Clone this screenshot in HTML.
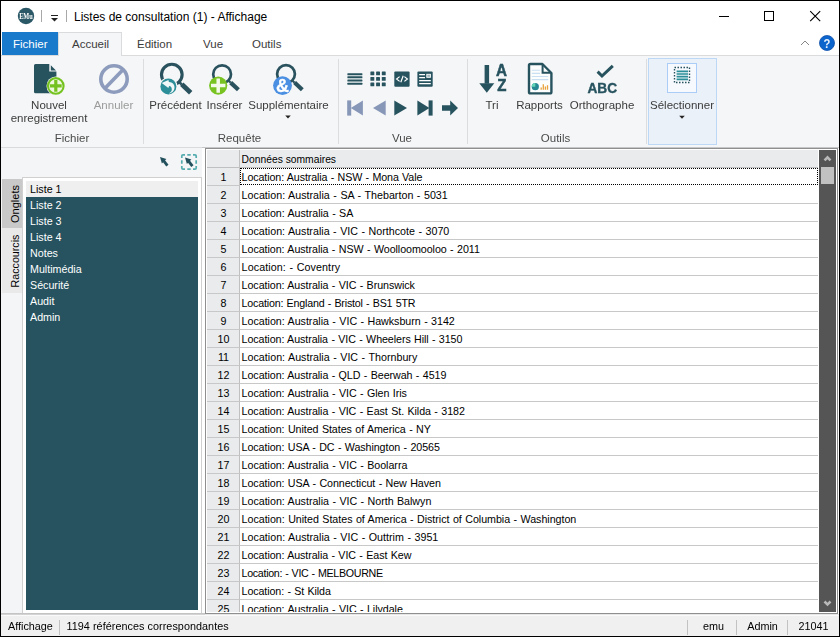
<!DOCTYPE html>
<html>
<head>
<meta charset="utf-8">
<title>Listes de consultation (1) - Affichage</title>
<style>
*{box-sizing:border-box;margin:0;padding:0}
html,body{width:840px;height:637px;overflow:hidden;background:#fff;font-family:"Liberation Sans",sans-serif;}
#win{position:absolute;left:0;top:0;width:840px;height:637px;background:#fff;overflow:hidden}
.abs{position:absolute}
.t{position:absolute;white-space:nowrap;line-height:1}
/* window frame */
#bt{left:0;top:0;width:840px;height:1px;background:#000}
#bl{left:0;top:0;width:1px;height:637px;background:#000}
#br{left:839px;top:0;width:1px;height:637px;background:#000}
#bb{left:0;top:636px;width:840px;height:1px;background:#000}
/* title */
#title{left:74px;top:11px;font-size:12px;color:#000}
/* tabs */
.tab{font-size:11.5px;color:#3b3b3b;top:39px}
/* ribbon */
#ribbon{left:1px;top:55px;width:838px;height:93px;background:#f5f6f7;border-top:1px solid #dadbdc;border-bottom:1px solid #c6c7c8}
.sep{position:absolute;width:1px;background:#dcddde;top:59px;height:85px}
.lbl{position:absolute;font-size:11.5px;color:#3b3b3b;white-space:nowrap;line-height:13px;text-align:center;transform:translateX(-50%)}
.grp{position:absolute;font-size:11.5px;color:#4a4a4a;white-space:nowrap;line-height:13px;top:132px;transform:translateX(-50%)}
/* left panel */
#left{left:1px;top:147px;width:201px;height:466px;background:#f4f5f7;border-top:1px solid #d9dadb}
.li{position:absolute;left:30px;font-size:10.7px;color:#fff;white-space:nowrap;line-height:12px}
/* grid */
#grid{left:205px;top:148px;width:633px;height:466px;background:#fff;border:1px solid #8f8f8f;overflow:hidden}
#gin{left:1px;top:1px;width:629px;height:462px;overflow:hidden;background:#fff}
.row{position:absolute;left:0;width:611px;height:18px;border-bottom:1px solid #c8c8c8}
.num{position:absolute;left:0;top:0;width:33px;height:18px;padding-left:1px;padding-top:1px;background:#e9ebed;border-right:1px solid #c0c0c0;border-bottom:1px solid #c8c8c8;font-size:10.7px;line-height:17px;text-align:center;color:#000}
.cell{position:absolute;left:34.6px;top:1px;word-spacing:.5px;font-size:10.7px;line-height:17px;color:#000;white-space:nowrap}
/* status */
#status{left:1px;top:614px;width:838px;height:22px;background:#f0f0f0;border-top:1px solid #e6e6e6;box-shadow:inset 0 1px 0 #fafafa}
.st{position:absolute;font-size:10.8px;color:#000;white-space:nowrap;line-height:12px;top:620px}
.ssep{position:absolute;width:1px;height:15px;top:620px;background:#c2c2c2}
</style>
</head>
<body>
<div id="win">
<!-- TITLEBAR -->
<svg class="abs" style="left:16.8px;top:6.8px;opacity:.999;will-change:opacity" width="18" height="18" viewBox="0 0 18 18"><circle cx="9" cy="9" r="8.2" fill="#2a5866"/><text x="9" y="11.9" font-family="Liberation Serif" font-weight="bold" font-size="8" fill="#fff" text-anchor="middle" textLength="13.6" lengthAdjust="spacingAndGlyphs">EMu</text></svg>
<div class="abs" style="left:41px;top:10px;width:1px;height:12px;background:#a8a8a8"></div>
<svg class="abs" style="left:50px;top:13px" width="10" height="10" viewBox="0 0 10 10"><rect x="1" y="2" width="7" height="1" fill="#222"/><path d="M1 5 H8 L4.5 8.5 Z" fill="#222"/></svg>
<div class="abs" style="left:66px;top:10px;width:1px;height:12px;background:#a8a8a8"></div>
<div class="t" id="title">Listes de consultation (1) - Affichage</div>
<svg class="abs" style="left:715px;top:8px" width="120" height="18" viewBox="0 0 120 18"><g stroke="#000" stroke-width="1" fill="none" shape-rendering="crispEdges"><path d="M4 8.5 H14"/><rect x="49.5" y="3.5" width="9" height="9"/></g><path d="M95.2 3.2 L105.2 13.2 M105.2 3.2 L95.2 13.2" stroke="#000" stroke-width="1.1" fill="none"/></svg>
<svg class="abs" style="left:799px;top:38px" width="12" height="10" viewBox="0 0 12 10"><path d="M2 7 L6 3 L10 7" stroke="#868686" stroke-width="1" fill="none"/></svg>
<svg class="abs" style="left:818px;top:33.85px;opacity:.999;will-change:opacity" width="18" height="18" viewBox="0 0 18 18"><circle cx="9" cy="9" r="7.5" fill="#0c64cd" stroke="#0e4fa8" stroke-width=".8"/><text transform="translate(9 13.6) scale(.84 1)" font-family="Liberation Sans" font-weight="bold" font-size="13.4" fill="#e8f1fb" text-anchor="middle">?</text></svg>
<!-- TABS -->
<div class="abs" style="left:2px;top:32px;width:56px;height:23px;background:#1979ca"></div>
<div class="t" style="left:13px;top:39px;font-size:11.5px;color:#fff">Fichier</div>
<div class="abs" style="left:58px;top:32px;width:64px;height:24px;background:#f5f6f7;border:1px solid #dadbdc;border-bottom:none;z-index:3"></div>
<div class="t tab" style="left:72px;z-index:4">Accueil</div>
<div class="t tab" style="left:137px">Édition</div>
<div class="t tab" style="left:203px">Vue</div>
<div class="t tab" style="left:252px">Outils</div>
<!-- RIBBON -->
<div class="abs" id="ribbon"></div>
<div class="abs" style="left:648px;top:58px;width:69px;height:87px;background:#ebf1f8;border:1px solid #bcd8f6"></div>
<div class="abs" style="left:667px;top:63px;width:30px;height:30px;background:#f6f9fd;border:1px solid #a9cdf6"></div>
<div class="sep" style="left:143px"></div><div class="sep" style="left:338px"></div><div class="sep" style="left:467px"></div><div class="sep" style="left:646px"></div>
<svg class="abs" style="left:0;top:0;opacity:.999;will-change:opacity" width="840" height="150" viewBox="0 0 840 150">
<defs>
<g id="mag"><circle cx="0" cy="0" r="8.9" fill="none" stroke="#2a525e" stroke-width="2.7"/><path d="M6.6 6.6 L8.6 8.6" stroke="#2a525e" stroke-width="2.2"/><path d="M8.6 8.4 L16.3 15.6" stroke="#2a525e" stroke-width="4.2"/></g>
</defs>
<!-- nouvel -->
<path d="M35.5 64 H49.3 V71.6 H56.4 V91.8 Q56.4 93.3 54.9 93.3 H35.5 Q34 93.3 34 91.8 V65.5 Q34 64 35.5 64 Z" fill="#27535f"/>
<path d="M50.8 65.2 L56 70.4 H50.8 Z" fill="#27535f"/>
<circle cx="55.8" cy="85.9" r="9.3" fill="#f5f6f7"/>
<circle cx="55.8" cy="85.9" r="7.8" fill="#eef8df" stroke="#74c21f" stroke-width="2.1"/>
<path d="M55.8 80 V91.8 M49.9 85.9 H61.7" stroke="#74c21f" stroke-width="3.2"/>
<!-- annuler -->
<circle cx="114" cy="79" r="13.2" fill="none" stroke="#8d9bbd" stroke-width="3.6"/>
<path d="M104.8 88.4 L123.2 69.6" stroke="#8d9bbd" stroke-width="3.6"/>
<!-- precedent -->
<g transform="translate(171.8 74.6) scale(1.16)"><use href="#mag"/></g>
<circle cx="168.4" cy="86.4" r="9.2" fill="#f5f6f7"/>
<circle cx="168.4" cy="86.4" r="8" fill="#2b8e98"/>
<path d="M161.7 83.1 L168.4 80 L168.9 82 C171.2 82 173.2 83.2 174 85 C174.8 86.8 174.7 88.9 173.7 90.6 C172.7 92.3 171 93.3 168.8 93.6 C171 92.2 172 90.4 171.8 88.9 C171.6 87.3 170.6 86.3 169.1 86.1 L168.4 88 Z" fill="#f0f7f8"/>
<!-- inserer -->
<g transform="translate(222.1 74.2)"><use href="#mag"/></g>
<circle cx="218.2" cy="85.6" r="9.1" fill="#78c322"/>
<path d="M218.2 78.4 V92.8 M211 85.6 H225.4" stroke="#f3faea" stroke-width="3.5"/>
<!-- supplementaire -->
<g transform="translate(286 74.1)"><use href="#mag"/></g>
<circle cx="282.5" cy="85.6" r="9.4" fill="#4a8fe2"/>
<text x="282.5" y="92" font-family="Liberation Sans" font-weight="bold" font-size="18" fill="#fff" stroke="#fff" stroke-width=".3" text-anchor="middle">&amp;</text>
<path d="M285.2 115.6 H290.8 L288 118.6 Z" fill="#222"/>
<!-- vue top row -->
<g fill="#27535f">
<rect x="347.4" y="73.2" width="15" height="2" rx=".5"/><rect x="347.4" y="76.3" width="15" height="2" rx=".5"/><rect x="347.4" y="79.5" width="15" height="2" rx=".5"/><rect x="347.4" y="82.8" width="15" height="2" rx=".5"/>
<g id="gr"><rect x="370.4" y="71.5" width="3.9" height="3.8" rx=".6"/><rect x="376.1" y="71.5" width="3.9" height="3.8" rx=".6"/><rect x="381.8" y="71.5" width="3.9" height="3.8" rx=".6"/></g>
<use href="#gr" y="5.5"/><use href="#gr" y="11"/>
<rect x="394.3" y="71.4" width="15.3" height="15.3" rx="1"/>
<rect x="417.4" y="71.4" width="15.3" height="15.3" rx="1"/>
</g>
<g stroke="#fff" stroke-width="1.2" fill="none"><path d="M399.6 76.6 L396.6 79 L399.6 81.4 M404.4 76.6 L407.4 79 L404.4 81.4 M403.2 75.8 L400.8 82.2"/>
<path d="M419.2 74.7 H425 M419.2 77.6 H425 M419.2 80.6 H430.8 M419.2 83.6 H430.8"/></g>
<rect x="426.8" y="74.3" width="3.6" height="3" fill="#9fb4ba" stroke="#fff" stroke-width=".9"/>
<!-- vue bottom row -->
<g fill="#8797b8"><rect x="347.2" y="100.4" width="4" height="15.2"/><path d="M362.9 100.4 V115.6 L350.8 108 Z"/><path d="M385.7 100.4 V115.6 L373 108 Z"/></g>
<g fill="#27535f"><path d="M394.3 100.4 V115.6 L407 108 Z"/><path d="M417.4 100.4 V115.6 L429.4 108 Z"/><rect x="428.6" y="100.4" width="4" height="15.2"/>
<path d="M442 105.2 H450.2 V100.4 L458 108 L450.2 115.6 V110.8 H442 Z"/></g>
<!-- tri -->
<g fill="#27535f"><rect x="484.6" y="65" width="4.5" height="18.6"/><path d="M479.3 83.2 H494.3 L486.8 92.8 Z"/>
<text x="501.5" y="76.3" font-family="Liberation Sans" font-weight="bold" font-size="15.6" text-anchor="middle" textLength="11" lengthAdjust="spacingAndGlyphs" stroke="#27535f" stroke-width=".5">A</text>
<text x="501.8" y="90.6" font-family="Liberation Sans" font-weight="bold" font-size="15.6" text-anchor="middle" textLength="9.2" lengthAdjust="spacingAndGlyphs" stroke="#27535f" stroke-width=".5">Z</text></g>
<!-- rapports -->
<path d="M530.4 64 H542.4 L551.4 73 V92 Q551.4 93.4 550 93.4 H530.4 Q529 93.4 529 92 V65.4 Q529 64 530.4 64 Z" fill="#fcfdfd" stroke="#27535f" stroke-width="2.4" stroke-linejoin="round"/>
<path d="M542.6 64.4 V72.8 H551" fill="none" stroke="#27535f" stroke-width="2"/>
<path d="M531.8 70.3 H540 M531.8 73.4 H540 M531.8 76.5 H548.2 M531.8 79.6 H548.2" stroke="#c9dff2" stroke-width="1.1"/>
<circle cx="535.3" cy="86.7" r="3.6" fill="#258892"/><path d="M535.3 86.7 V83.1 A3.6 3.6 0 0 0 531.7 86.7 Z" fill="#63d4b6"/>
<path d="M541.2 89.8 V87.6 M543.3 89.8 V84.2 M545.4 89.8 V86.6 M547.5 89.8 V85.2" stroke="#e9a23b" stroke-width="1.3"/>
<!-- orthographe -->
<path d="M597.6 71.6 L602 76 L612.8 65.8" fill="none" stroke="#27535f" stroke-width="3"/>
<text x="602.3" y="92.5" font-family="Liberation Sans" font-weight="bold" font-size="14.8" fill="#27535f" stroke="#27535f" stroke-width=".4" text-anchor="middle" textLength="29.6" lengthAdjust="spacingAndGlyphs">ABC</text>
<!-- selectionner -->
<rect x="674.5" y="67.5" width="15" height="15" fill="none" stroke="#27535f" stroke-width="1.4" stroke-dasharray="1.5 1.5"/>
<path d="M676.6 71.3 H688 M676.6 74 H688 M676.6 76.7 H688 M676.6 79.4 H688" stroke="#2b8e98" stroke-width="1.7"/>
<path d="M679.2 115.8 H684.8 L682 118.8 Z" fill="#222"/>
</svg>
<div class="lbl" style="left:49px;top:99px">Nouvel<br>enregistrement</div>
<div class="lbl" style="left:113.5px;top:99px;color:#9b9b9b">Annuler</div>
<div class="lbl" style="left:175.5px;top:99px">Précédent</div>
<div class="lbl" style="left:224.5px;top:99px">Insérer</div>
<div class="lbl" style="left:288.5px;top:99px">Supplémentaire</div>
<div class="lbl" style="left:492px;top:99px">Tri</div>
<div class="lbl" style="left:539.5px;top:99px">Rapports</div>
<div class="lbl" style="left:602px;top:99px">Orthographe</div>
<div class="lbl" style="left:682px;top:99px">Sélectionner</div>
<div class="grp" style="left:72px">Fichier</div>
<div class="grp" style="left:239.5px">Requête</div>
<div class="grp" style="left:402px">Vue</div>
<div class="grp" style="left:555.5px">Outils</div>
<!-- LEFT -->
<div class="abs" id="left"></div>
<svg class="abs" style="left:155px;top:152px" width="46" height="20" viewBox="155 152 46 20">
<g id="arw" fill="#22505c" stroke="none"><path d="M160 157 L166.4 158.9 L161.9 163.4 Z"/><path d="M163.2 160.2 L167.4 165.6" stroke="#22505c" stroke-width="2.8"/></g>
<path d="M181.8 158 V156 Q181.8 154.8 183 154.8 H185 M187.3 154.8 H190.7 M193 154.8 H195 Q196.2 154.8 196.2 156 V158 M196.2 160.3 V163.7 M196.2 166 V168 Q196.2 169.2 195 169.2 H193 M190.7 169.2 H187.3 M185 169.2 H183 Q181.8 169.2 181.8 168 V166 M181.8 163.7 V160.3" fill="none" stroke="#55acaf" stroke-width="1.7"/>
<use href="#arw" x="25" y="0.5"/>
</svg>
<div class="abs" style="left:2px;top:179px;width:20px;height:49px;background:#c9c9c9"></div>
<div class="abs" style="left:2px;top:228px;width:20px;height:65px;background:#e9e9e9"></div>
<div class="t" style="left:14.5px;top:203.5px;font-size:11px;color:#000;transform:translate(-50%,-50%) rotate(-90deg)">Onglets</div>
<div class="t" style="left:14.5px;top:260.5px;font-size:10.7px;color:#000;transform:translate(-50%,-50%) rotate(-90deg)">Raccourcis</div>
<div class="abs" style="left:22px;top:177px;width:180px;height:436px;background:#fff;border:1px solid #d0d0d0;border-bottom:none"></div>
<div class="abs" style="left:1px;top:613px;width:204px;height:1px;background:#c4c4c4"></div>
<div class="abs" style="left:26px;top:181px;width:172px;height:429px;background:#26535f"></div>
<div class="abs" style="left:26px;top:181px;width:172px;height:16px;background:#efefef"></div>
<div class="li" style="top:183px;color:#000">Liste 1</div>
<div class="li" style="top:199px;color:#fff">Liste 2</div>
<div class="li" style="top:215px;color:#fff">Liste 3</div>
<div class="li" style="top:231px;color:#fff">Liste 4</div>
<div class="li" style="top:247px;color:#fff">Notes</div>
<div class="li" style="top:263px;color:#fff">Multimédia</div>
<div class="li" style="top:279px;color:#fff">Sécurité</div>
<div class="li" style="top:295px;color:#fff">Audit</div>
<div class="li" style="top:311px;color:#fff">Admin</div>
<!-- GRID -->
<div class="abs" id="grid"><div class="abs" id="gin">
<div class="abs" style="left:0;top:0;width:611px;height:18px;background:#e9ebed;border-bottom:1px solid #c0c0c0"></div>
<div class="abs" style="left:32px;top:0;width:1px;height:18px;background:#c0c0c0"></div>
<div class="t" style="left:34.6px;top:4px;font-size:10.3px;line-height:12px">Données sommaires</div>
<div class="row" style="top:18px;border-bottom-color:#fff"><div class="num">1</div><div class="cell" style="letter-spacing:-0.105px">Location: Australia - NSW - Mona Vale</div></div>
<div class="row" style="top:36px"><div class="num">2</div><div class="cell" style="letter-spacing:0.021px">Location: Australia - SA - Thebarton - 5031</div></div>
<div class="row" style="top:54px"><div class="num">3</div><div class="cell" style="letter-spacing:-0.037px">Location: Australia - SA</div></div>
<div class="row" style="top:72px"><div class="num">4</div><div class="cell" style="letter-spacing:0.01px">Location: Australia - VIC - Northcote - 3070</div></div>
<div class="row" style="top:90px"><div class="num">5</div><div class="cell" style="letter-spacing:-0.052px">Location: Australia - NSW - Woolloomooloo - 2011</div></div>
<div class="row" style="top:108px"><div class="num">6</div><div class="cell" style="letter-spacing:0.103px">Location: - Coventry</div></div>
<div class="row" style="top:126px"><div class="num">7</div><div class="cell" style="letter-spacing:-0.058px">Location: Australia - VIC - Brunswick</div></div>
<div class="row" style="top:144px"><div class="num">8</div><div class="cell" style="letter-spacing:-0.187px">Location: England - Bristol - BS1 5TR</div></div>
<div class="row" style="top:162px"><div class="num">9</div><div class="cell" style="letter-spacing:-0.027px">Location: Australia - VIC - Hawksburn - 3142</div></div>
<div class="row" style="top:180px"><div class="num">10</div><div class="cell" style="letter-spacing:-0.076px">Location: Australia - VIC - Wheelers Hill - 3150</div></div>
<div class="row" style="top:198px"><div class="num">11</div><div class="cell" style="letter-spacing:0.014px">Location: Australia - VIC - Thornbury</div></div>
<div class="row" style="top:216px"><div class="num">12</div><div class="cell" style="letter-spacing:-0.061px">Location: Australia - QLD - Beerwah - 4519</div></div>
<div class="row" style="top:234px"><div class="num">13</div><div class="cell" style="letter-spacing:-0.047px">Location: Australia - VIC - Glen Iris</div></div>
<div class="row" style="top:252px"><div class="num">14</div><div class="cell" style="letter-spacing:-0.059px">Location: Australia - VIC - East St. Kilda - 3182</div></div>
<div class="row" style="top:270px"><div class="num">15</div><div class="cell" style="letter-spacing:-0.054px">Location: United States of America - NY</div></div>
<div class="row" style="top:288px"><div class="num">16</div><div class="cell" style="letter-spacing:-0.07px">Location: USA - DC - Washington - 20565</div></div>
<div class="row" style="top:306px"><div class="num">17</div><div class="cell" style="letter-spacing:-0.037px">Location: Australia - VIC - Boolarra</div></div>
<div class="row" style="top:324px"><div class="num">18</div><div class="cell" style="letter-spacing:-0.057px">Location: USA - Connecticut - New Haven</div></div>
<div class="row" style="top:342px"><div class="num">19</div><div class="cell" style="letter-spacing:-0.025px">Location: Australia - VIC - North Balwyn</div></div>
<div class="row" style="top:360px"><div class="num">20</div><div class="cell" style="letter-spacing:-0.028px">Location: United States of America - District of Columbia - Washington</div></div>
<div class="row" style="top:378px"><div class="num">21</div><div class="cell" style="letter-spacing:0.018px">Location: Australia - VIC - Outtrim - 3951</div></div>
<div class="row" style="top:396px"><div class="num">22</div><div class="cell" style="letter-spacing:-0.072px">Location: Australia - VIC - East Kew</div></div>
<div class="row" style="top:414px"><div class="num">23</div><div class="cell" style="letter-spacing:-0.322px">Location: - VIC - MELBOURNE</div></div>
<div class="row" style="top:432px"><div class="num">24</div><div class="cell" style="letter-spacing:-0.101px">Location: - St Kilda</div></div>
<div class="row" style="top:450px"><div class="num">25</div><div class="cell" style="letter-spacing:-0.047px">Location: Australia - VIC - Lilydale</div></div>
<div class="abs" style="left:33px;top:18px;width:578px;height:17px;border:1px dotted #000"></div>
<div class="abs" style="left:612px;top:0;width:17px;height:462px;background:#555"></div>
<div class="abs" style="left:614px;top:17px;width:13px;height:17px;background:#c1c1c1"></div>
<svg class="abs" style="left:612px;top:0" width="17" height="462" viewBox="0.5 0 17 462"><g fill="#b9b9b9"><path d="M9 5.6 L12.9 9.5 L11.1 11.3 L9 9.2 L6.9 11.3 L5.1 9.5 Z"/><path d="M9 456.3 L12.9 452.4 L11.1 450.6 L9 452.7 L6.9 450.6 L5.1 452.4 Z"/></g></svg>
</div></div>
<!-- STATUS -->
<div class="abs" id="status"></div>
<div class="abs" style="left:1px;top:614px;width:204px;height:1px;background:#d3d3d3"></div>
<div class="st" style="left:8px">Affichage</div>
<div class="ssep" style="left:59px"></div>
<div class="st" style="left:66.5px;letter-spacing:.05px">1194 références correspondantes</div>
<div class="ssep" style="left:687px"></div><div class="ssep" style="left:736px"></div><div class="ssep" style="left:787px"></div>
<div class="st" style="left:713.5px;transform:translateX(-50%)">emu</div>
<div class="st" style="left:762.5px;transform:translateX(-50%)">Admin</div>
<div class="st" style="left:813.5px;transform:translateX(-50%)">21041</div>
<!-- FRAME -->
<div class="abs" id="bt"></div><div class="abs" id="bl"></div><div class="abs" id="br"></div><div class="abs" id="bb"></div>
</div>
</body>
</html>
